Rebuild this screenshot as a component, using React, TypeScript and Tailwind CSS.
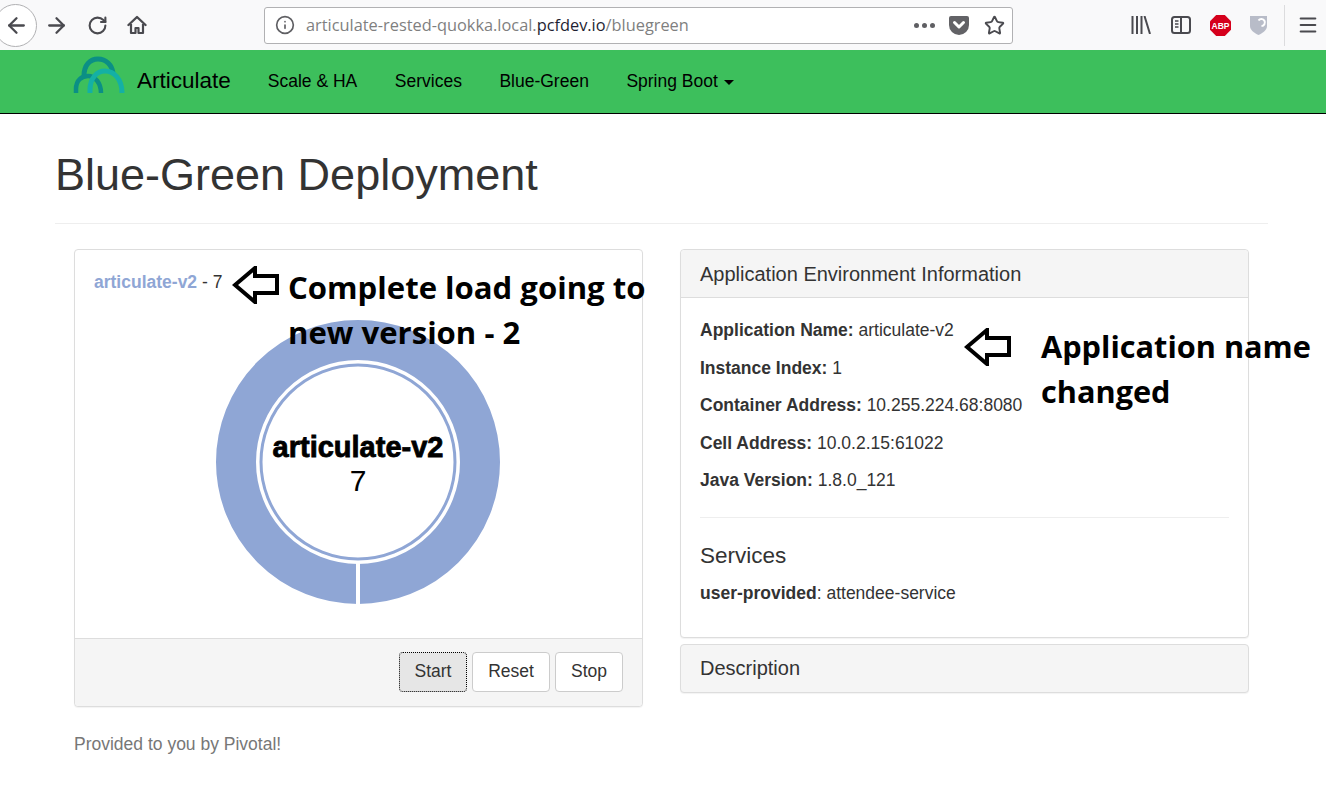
import React from 'react';
import { ArrowLeft, ArrowRight, RotateCw, Info, Star, Menu } from 'lucide-react';

function HomeIcon() {
  return (
    <svg width="20" height="20" viewBox="0 0 20 20" fill="none">
      <path d="M1.500 10 10 2l8.500 8" stroke="#4a4a4f" strokeWidth="2.400" strokeLinecap="round" strokeLinejoin="round" />
      <path d="M4 9v9h4.500v-5h3v5H16V9" stroke="#4a4a4f" strokeWidth="2.200" strokeLinejoin="round" />
    </svg>
  );
}

function Logo() {
  return (
    <svg width="52" height="38" viewBox="0 0 52 38" fill="none">
      <path d="M11 20C11 9 17 3 25 3c8 0 14 6 15 14" stroke="#0b8f85" strokeWidth="5" />
      <path d="M3 37v-4c0-9 6-13 12-13 7 0 13 7 13 17" stroke="#0b8f85" strokeWidth="4.500" />
      <path d="M17 37v-3c0-12 7-19 15-19 9 0 17 8 17 22" stroke="#14b0a5" strokeWidth="5" />
    </svg>
  );
}

function Toolbar() {
  return (
    <div className="flex h-[50px] items-center bg-[#f9f9fa] text-[#4a4a4f]">
      <div className="ml-[-6px] flex h-[43px] w-[43px] items-center justify-center rounded-full border border-[#b1b1b3] bg-white pl-[2px]">
        <ArrowLeft size={25} strokeWidth={2.2} />
      </div>
      <ArrowRight size={25} strokeWidth={2.2} className="ml-[7px]" />
      <RotateCw size={21} strokeWidth={2.4} className="ml-[18px]" />
      <div className="ml-[19px]"><HomeIcon /></div>
      <div className="ml-[117px] flex h-[37px] w-[749px] items-center rounded-[3px] border border-[#b1b1b3] bg-white pl-[10px] pr-[7px]">
        <Info size={20} strokeWidth={2} className="text-[#5f5f63]" />
        <div className="ml-[11px] flex-1 font-['Open_Sans',sans-serif] text-[16.350px] text-[#7f7f7f]">
          articulate-rested-quokka.local.<span className="text-[#1f1f33]">pcfdev.io</span>/bluegreen
        </div>
        <div className="flex gap-[3px]">
          <span className="h-[5px] w-[5px] rounded-full bg-[#5f5f63]" />
          <span className="h-[5px] w-[5px] rounded-full bg-[#5f5f63]" />
          <span className="h-[5px] w-[5px] rounded-full bg-[#5f5f63]" />
        </div>
        <svg className="ml-[14px]" width="20" height="19" viewBox="0 0 20 19">
          <path d="M2 0h16a2 2 0 0 1 2 2v7a10 10 0 0 1-20 0V2a2 2 0 0 1 2-2z" fill="#626266" />
          <path d="M5.500 6.500 10 11l4.500-4.500" stroke="#fff" strokeWidth="3" strokeLinecap="round" strokeLinejoin="round" fill="none" />
        </svg>
        <Star size={21} strokeWidth={2.2} className="ml-[15px]" />
      </div>
      <svg className="ml-[118px]" width="20" height="18" viewBox="0 0 20 18" fill="none" stroke="#4a4a4f" strokeWidth="2">
        <path d="M1.500 0v18M6 0v18M10.500 0v18M13.500 0l5.500 18" />
      </svg>
      <svg className="ml-[20px]" width="20" height="18" viewBox="0 0 20 18" fill="none">
        <rect x="1" y="1" width="18" height="16" rx="2.500" stroke="#4a4a4f" strokeWidth="2" />
        <path d="M10 1v16" stroke="#4a4a4f" strokeWidth="2" />
        <path d="M4 5h3.500M4 8h3.500M4 11h3.500" stroke="#4a4a4f" strokeWidth="1.500" />
      </svg>
      <svg className="ml-[19px]" width="21" height="21" viewBox="0 0 21 21">
        <path d="M6.200 0h8.600L21 6.200v8.600L14.800 21H6.200L0 14.800V6.200z" fill="#d5001c" />
        <text x="10.500" y="13.800" textAnchor="middle" fill="#fff" fontSize="8.500" fontWeight="700" fontFamily="'Liberation Sans', sans-serif">ABP</text>
      </svg>
      <svg className="ml-[19px]" width="17" height="20" viewBox="0 0 17 20">
        <path d="M0 1h17v10c0 4-4 7-8.500 9C4 18 0 15 0 11z" fill="#b8bcc8" />
        <path d="M11.500 11a3.500 3.500 0 1 0-3-5.500" stroke="#fff" strokeWidth="2" fill="none" />
      </svg>
      <div className="ml-[17px] h-[41px] w-px bg-[#dcdcde]" />
      <Menu size={22} strokeWidth={2.2} className="ml-[12px]" />
    </div>
  );
}

function Navbar() {
  return (
    <nav className="flex h-[64px] items-center border-b border-black bg-[#3dbf5c] pb-px text-[17.500px] text-black">
      <div className="ml-[73px] mt-[-13px]"><Logo /></div>
      <span className="ml-[12px] text-[22.500px]">Articulate</span>
      <span className="ml-[37px]">Scale &amp; HA</span>
      <span className="ml-[37.500px]">Services</span>
      <span className="ml-[37.500px]">Blue-Green</span>
      <span className="ml-[37.500px]">Spring Boot</span>
      <span className="ml-[6px] mt-[2px] h-0 w-0 border-x-[5px] border-t-[5px] border-x-transparent border-t-black" />
    </nav>
  );
}

function Donut() {
  return (
    <div className="relative ml-[121px] mt-[25px] h-[286px] w-[286px]">
      <svg width="286" height="286" viewBox="0 0 286 286">
        <circle cx="143" cy="143" r="122" fill="none" stroke="#8fa6d5" strokeWidth="40" />
        <rect x="141" y="243" width="4" height="43" fill="#fff" />
        <circle cx="143" cy="143" r="97" fill="#fff" stroke="#8fa6d5" strokeWidth="3" />
      </svg>
      <div className="absolute inset-x-0 top-[113px] text-center text-black">
        <div className="text-[29px] leading-[30px] font-bold [-webkit-text-stroke:0.8px_black]">articulate-v2</div>
        <div className="text-[30px] leading-[38px]">7</div>
      </div>
    </div>
  );
}

function LoadPanel() {
  return (
    <div className="w-[569px] rounded-[4px] border border-[#ddd] bg-white shadow-[0_1px_1px_rgba(0,0,0,0.05)]">
      <div className="h-[388px] px-[19px] pt-[20px]">
        <div className="leading-[24px]">
          <span className="font-bold text-[#8fa6d5]">articulate-v2</span> - 7
        </div>
        <Donut />
      </div>
      <div className="flex h-[68px] items-center justify-end gap-[5px] rounded-b-[4px] border-t border-[#ddd] bg-[#f5f5f5] pb-[2px] pr-[19px]">
        <button className="h-[40px] w-[68px] rounded-[4px] border border-dotted border-black bg-[#e6e6e6]">Start</button>
        <button className="h-[40px] w-[78px] rounded-[4px] border border-[#ccc] bg-white">Reset</button>
        <button className="h-[40px] w-[68px] rounded-[4px] border border-[#ccc] bg-white">Stop</button>
      </div>
    </div>
  );
}

function EnvPanel() {
  const rows = [
    ['Application Name:', 'articulate-v2'],
    ['Instance Index:', '1'],
    ['Container Address:', '10.255.224.68:8080'],
    ['Cell Address:', '10.0.2.15:61022'],
    ['Java Version:', '1.8.0_121'],
  ];

  return (
    <div className="flex w-[569px] flex-col gap-[6px]">
      <div className="rounded-[4px] border border-[#ddd] bg-white shadow-[0_1px_1px_rgba(0,0,0,0.05)]">
        <div className="flex h-[48px] items-center rounded-t-[4px] border-b border-[#ddd] bg-[#f5f5f5] px-[19px] text-[20px]">
          Application Environment Information
        </div>
        <div className="h-[339px] px-[19px] pt-[14px]">
          {rows.map(([label, value]) => (
            <div key={label} className="h-[37.500px] leading-[37.500px]">
              <b>{label}</b> {value}
            </div>
          ))}
          <div className="mt-[17px] border-t border-[#eee]" />
          <div className="mt-[24px] text-[22.500px] leading-[28px]">Services</div>
          <div className="mt-[11px] leading-[24px]">
            <b>user-provided</b>: attendee-service
          </div>
        </div>
      </div>
      <div className="flex h-[49px] items-center rounded-[4px] border border-[#ddd] bg-[#f5f5f5] px-[19px] pb-px text-[20px] shadow-[0_1px_1px_rgba(0,0,0,0.05)]">
        Description
      </div>
    </div>
  );
}

function Arrow({ className }: { className: string }) {
  return (
    <svg className={className} width="48" height="38" viewBox="0 0 48 38" fill="none">
      <path d="M3 19 23 2v8h22v17H23v9z" stroke="#000" strokeWidth="4" fill="#fff" />
    </svg>
  );
}

export default function App() {
  const note = "absolute font-['Open_Sans',sans-serif] leading-[45px] font-bold text-black";

  return (
    <div className="relative h-[793px] w-[1326px] overflow-hidden bg-white font-['Liberation_Sans',sans-serif] text-[17.500px] text-[#333]">
      <Toolbar />
      <Navbar />
      <div className="ml-[55px] mr-[58px] mt-[31px]">
        <h1 className="pb-[18px] text-[45px] leading-[60px]">Blue-Green Deployment</h1>
        <div className="border-t border-[#eee]" />
      </div>
      <div className="ml-[74px] mt-[25px] flex items-start gap-[37px]">
        <LoadPanel />
        <EnvPanel />
      </div>
      <div className="ml-[74px] mt-[24px] text-[#777]">Provided to you by Pivotal!</div>

      {/* annotations pasted over the screenshot */}
      <Arrow className="absolute left-[232px] top-[266px]" />
      <div className={`${note} left-[288px] top-[265px] text-[31.100px]`}>
        Complete load going to<br />new version - 2
      </div>
      <Arrow className="absolute left-[964px] top-[328px]" />
      <div className={`${note} left-[1041px] top-[324px] text-[30.700px]`}>
        Application name<br />changed
      </div>
    </div>
  );
}
